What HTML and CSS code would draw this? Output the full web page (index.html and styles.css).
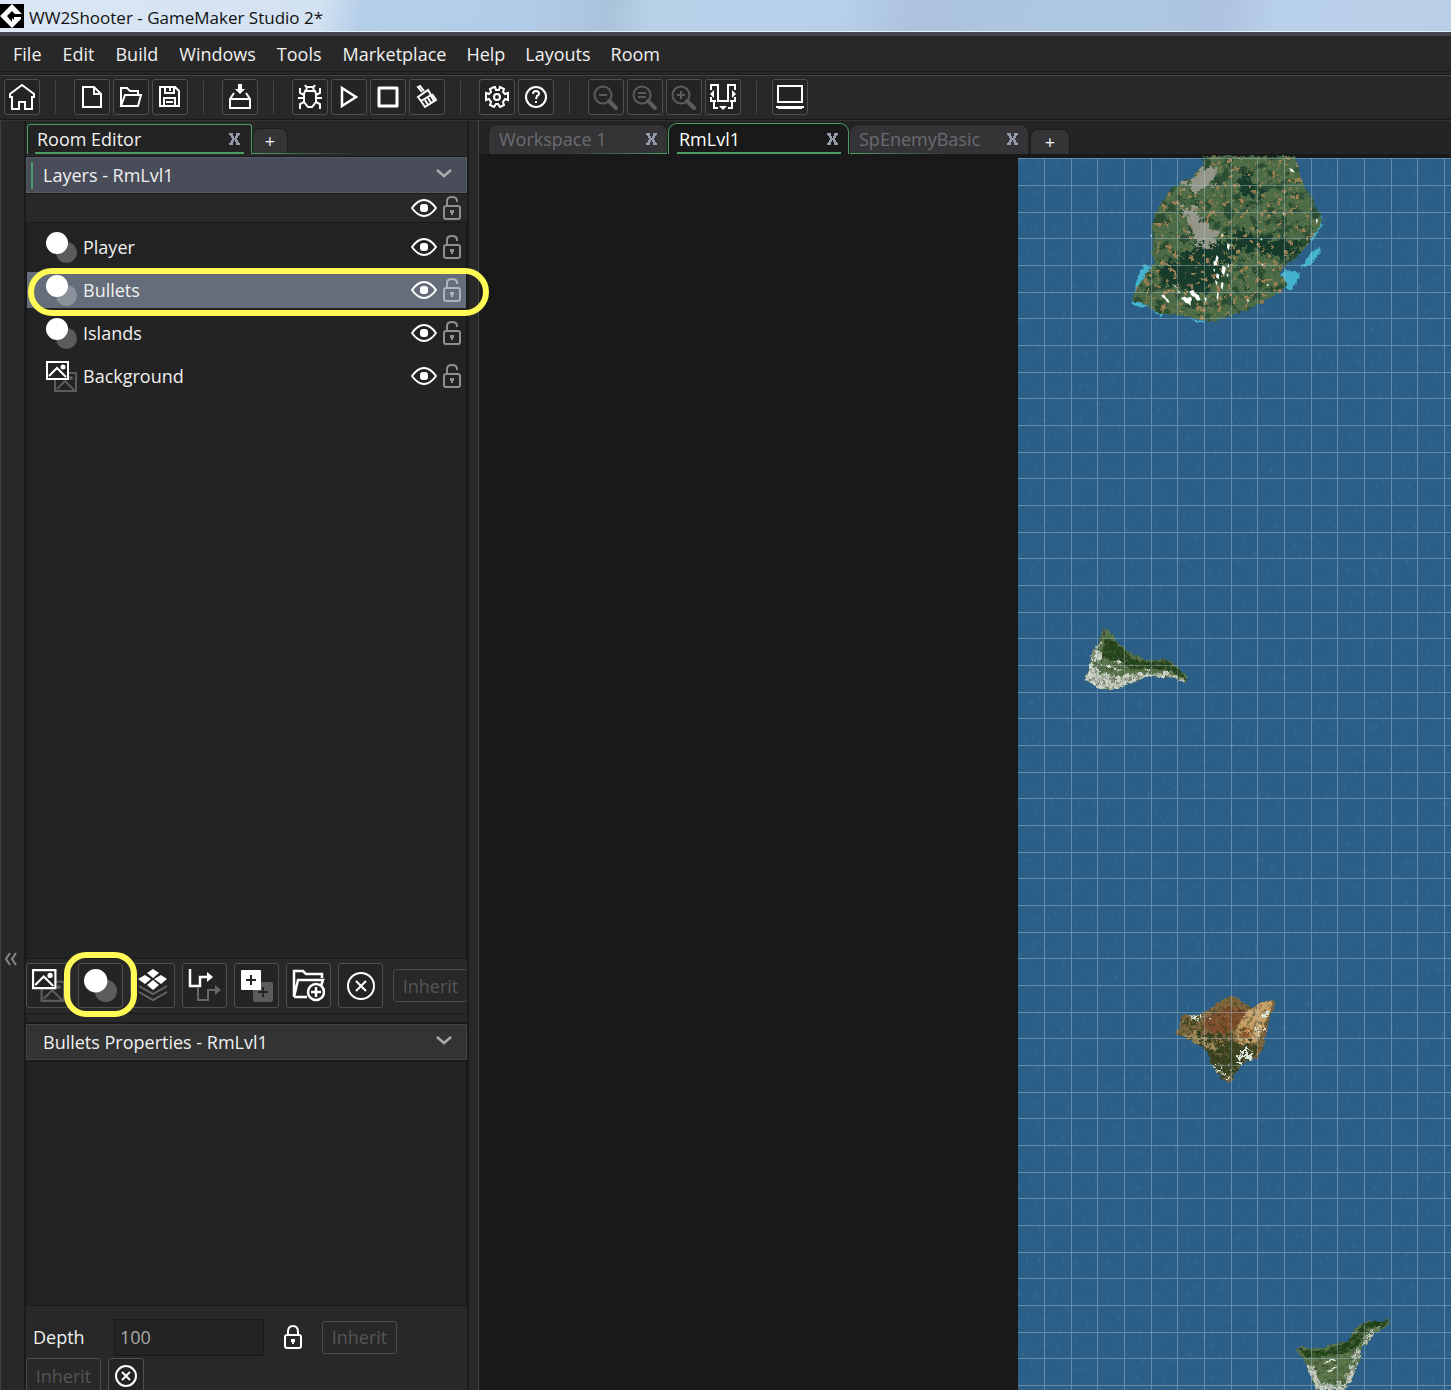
FILE: index.html
```html
<!DOCTYPE html>
<html lang="en">
<head>
<meta charset="utf-8">
<title>WW2Shooter - GameMaker Studio 2*</title>
<link rel="stylesheet" href="styles.css">
</head>
<body>
<svg class="defs" aria-hidden="true">
  <symbol id="i-close" viewBox="0 0 11 12"><path d="M0 0h4v3h1v2h1V3h1V0h4v2h-1v1H9v2H8v2h1v2h1v1h1v2H7V9H6V7H5v2H4v3H0v-2h1V9h1V7h1V5H2V3H1V2H0z" fill="currentColor"/></symbol>
  <symbol id="i-eye" viewBox="0 0 26 18"><path d="M1 9C6 2 10 1 13 1s7 1 12 8c-5 7-9 8-12 8S6 16 1 9z" fill="none" stroke="#fff" stroke-width="2"/><rect x="9" y="5" width="8" height="8" rx="3" fill="#fff"/></symbol>
  <symbol id="i-unlock" viewBox="0 0 18 24"><path d="M4 6V5q0-4 5-4t5 4v1M4 6v4M3 10h12q2 0 2 2v9q0 2-2 2H3q-2 0-2-2v-9q0-2 2-2z" fill="none" stroke="currentColor" stroke-width="2"/><path d="M8 19v-2H7v-3h4v3h-1v2z" fill="currentColor"/></symbol>
  <symbol id="i-lock" viewBox="0 0 18 24"><path d="M4 10V7q0-6 5-6t5 6v3M3 10h12q2 0 2 2v9q0 2-2 2H3q-2 0-2-2v-9q0-2 2-2z" fill="none" stroke="#fff" stroke-width="2"/><path d="M8 19v-2H7v-3h4v3h-1v2z" fill="#fff"/></symbol>
  <symbol id="i-instances" viewBox="0 0 31 31"><circle cx="20.500" cy="20.500" r="10.500" fill="#fff" fill-opacity=".26"/><circle cx="11" cy="11" r="11" fill="#fff"/></symbol>
  <symbol id="i-picture" viewBox="0 0 31 31"><g fill="none" stroke="#5c5c5c" stroke-width="2"><path d="M9 12h21v18H9zM11 28l8-8 9 9"/><circle cx="25" cy="17" r="1"/></g><path d="M1 1h21v17H1z" fill="#232323" stroke="#fff" stroke-width="2"/><path d="M3 15l8-8 9 9" fill="none" stroke="#fff" stroke-width="2"/><circle cx="17" cy="6" r="2.500" fill="#fff"/></symbol>
  <symbol id="i-chevron" viewBox="0 0 16 9"><path d="M1 1l7 6 7-6" fill="none" stroke="#aaa" stroke-width="2.500"/></symbol>
  <symbol id="i-lens" viewBox="0 0 26 26"><circle cx="10" cy="10" r="8.500" fill="none" stroke="#5c5c5c" stroke-width="2"/><path d="M16 16l7 7" stroke="#5c5c5c" stroke-width="4" stroke-linecap="round"/></symbol>
</svg>

<div class="app">
  <header class="title">
    <svg width="24" height="24" viewBox="0 0 24 24"><path d="M0 0h24v24H0z"/><path d="M12 0l10 10H12v4l2 2v-3h7v2l-9 9L0 12z" fill="#fff"/><path d="M12 7l-5 5 5 6v-6h5z"/></svg>
    <span>WW2Shooter - GameMaker Studio 2*</span>
  </header>

  <nav class="menu">
    <a href="#">File</a><a href="#">Edit</a><a href="#">Build</a><a href="#">Windows</a><a href="#">Tools</a><a href="#">Marketplace</a><a href="#">Help</a><a href="#">Layouts</a><a href="#">Room</a>
  </nav>

  <div class="toolbar">
    <div class="group">
      <button class="tool" aria-label="Home"><svg width="28" height="28" viewBox="0 0 28 28"><path d="M2 14V11L14 2l12 9v3h-2v12h-7v-7h-6v7H4V14z"/></svg></button>
    </div>
    <div class="group">
      <button class="tool" aria-label="New"><svg width="28" height="28" viewBox="0 0 28 28"><path d="M5 4h11l7 7v13H5zM16 4v7h7"/></svg></button>
      <button class="tool" aria-label="Open"><svg width="28" height="28" viewBox="0 0 28 28"><path d="M4 23V5h6l3 3h8v4M4 23l4-11h16l-3 11z"/></svg></button>
      <button class="tool" aria-label="Save"><svg width="28" height="28" viewBox="0 0 28 28"><path d="M4 4h15l4 4v15H4zM9 4v6h9V4M14 4v4M8 23v-8h11v8M10 19h7"/></svg></button>
    </div>
    <div class="group">
      <button class="tool" aria-label="Create executable"><svg width="28" height="28" viewBox="0 0 28 28"><path d="M8 10l-4 6v9h20v-9l-4-6M4 16h20"/><path d="M12 1h4v5h3l-5 5-5-5h3z" fill="#fff" stroke="none"/></svg></button>
    </div>
    <div class="group">
      <button class="tool" aria-label="Debug"><svg width="28" height="28" viewBox="0 0 28 28"><path d="M9 8h10l1 3v8l-4 5h-4l-4-5v-8zM10 8l1-4h6l1 4M11 5L9 2M17 5l2-3M8 12L4 10V5M20 12l4-2V5M8 15H2M20 15h6M8 19l-4 2v5M20 19l4 2v5"/></svg></button>
      <button class="tool" aria-label="Run"><svg width="28" height="28" viewBox="0 0 28 28"><path d="M7 5l14 9L7 23z" stroke-width="2.500"/></svg></button>
      <button class="tool" aria-label="Stop"><svg width="28" height="28" viewBox="0 0 28 28"><path d="M5 5h18v18H5z" stroke-width="3" stroke-linejoin="round"/></svg></button>
      <button class="tool" aria-label="Clean"><svg width="28" height="28" viewBox="0 0 28 28"><path d="M5 14l10-7 3 5-10 6zM8 18l4 6 11-7-4-6M9 9L5 4l2-1 4 5M12 17l3 5M15 15l3 5M18 13l3 5"/></svg></button>
    </div>
    <div class="group">
      <button class="tool" aria-label="Game options"><svg width="28" height="28" viewBox="0 0 28 28"><path d="M11 4h1l1 3h3l1-3 4 2-1 3 2 2 3-1v7l-3-1-2 3 1 3-4 2-2-3h-2l-2 3-4-2 1-3-2-3-3 1v-7l3 1 2-2-1-3z"/><circle cx="14" cy="14" r="3"/></svg></button>
      <button class="tool" aria-label="Help"><svg width="28" height="28" viewBox="0 0 28 28"><circle cx="14" cy="14" r="10"/><path d="M11 11q0-3 3-3t3 3q0 1-2 2l-1 3M14 18v2"/></svg></button>
    </div>
    <div class="group">
      <button class="tool" aria-label="Zoom out" disabled><svg width="28" height="28" viewBox="0 0 28 28"><use href="#i-lens" x="1" y="2" width="26" height="26"/><path d="M7 12h8"/></svg></button>
      <button class="tool" aria-label="Reset zoom" disabled><svg width="28" height="28" viewBox="0 0 28 28"><use href="#i-lens" x="1" y="2" width="26" height="26"/><path d="M7 10h8M7 14h8"/></svg></button>
      <button class="tool" aria-label="Zoom in" disabled><svg width="28" height="28" viewBox="0 0 28 28"><use href="#i-lens" x="1" y="2" width="26" height="26"/><path d="M7 12h8M11 8v8"/></svg></button>
      <button class="tool" aria-label="Toggle docks"><svg width="28" height="28" viewBox="0 0 28 28"><path d="M2 7V2h7v16h10V2h7v5M2 14v4h5M26 14v4h-5M5 18v7h4M23 18v7h-4M13 18h2"/><path d="M1 11l4-4v8zM27 11l-4-4v8zM10 23h8l-4 4z" fill="#fff" stroke="none"/></svg></button>
    </div>
    <div class="group tight">
      <button class="tool" aria-label="Laptop mode"><svg width="28" height="28" viewBox="0 0 28 28"><path d="M2 3h24v16H2z"/><path d="M0 23h28v2H0zM2 25h24v1H2z" fill="#fff" stroke="none"/></svg></button>
    </div>
  </div>

  <main class="body">
    <div class="strip"><button aria-label="Collapse"><svg width="12" height="14" viewBox="0 0 12 14"><path d="M5 1L1 7l4 6M11 1L7 7l4 6" fill="none" stroke="#888" stroke-width="2"/></svg></button></div>

    <aside class="dock">
      <div class="tabs dock-tabs">
        <div class="tab active">Room Editor<button class="close" aria-label="Close Room Editor"><svg width="11" height="12"><use href="#i-close"/></svg></button></div>
        <button class="add">+</button>
      </div>
      <section class="layers">
        <h2 class="head current">Layers - RmLvl1<svg width="16" height="9"><use href="#i-chevron"/></svg></h2>
        <div class="all"><svg width="26" height="18"><use href="#i-eye"/></svg><svg width="18" height="24"><use href="#i-unlock"/></svg></div>
        <ul class="list">
          <li><svg width="31" height="31"><use href="#i-instances"/></svg><span>Player</span><svg width="26" height="18"><use href="#i-eye"/></svg><svg width="18" height="24"><use href="#i-unlock"/></svg></li>
          <li class="selected"><svg width="31" height="31"><use href="#i-instances"/></svg><span>Bullets</span><svg width="26" height="18"><use href="#i-eye"/></svg><svg width="18" height="24"><use href="#i-unlock"/></svg><i class="ring wide"></i></li>
          <li><svg width="31" height="31"><use href="#i-instances"/></svg><span>Islands</span><svg width="26" height="18"><use href="#i-eye"/></svg><svg width="18" height="24"><use href="#i-unlock"/></svg></li>
          <li><svg width="31" height="31"><use href="#i-picture"/></svg><span>Background</span><svg width="26" height="18"><use href="#i-eye"/></svg><svg width="18" height="24"><use href="#i-unlock"/></svg></li>
        </ul>
        <div class="actions-wrap">
          <div class="actions">
            <button class="act" aria-label="New background layer"><svg width="33" height="33"><use href="#i-picture"/></svg></button>
            <button class="act" aria-label="New instance layer"><svg width="33" height="33"><use href="#i-instances"/></svg></button>
            <button class="act" aria-label="New tile layer"><svg width="33" height="33" viewBox="0 0 33 33"><path d="M3 17l14 8 14-8M3 23l14 8 14-8" fill="none" stroke="#666" stroke-width="2"/><path d="M17 0l6 4-6 5-6-5zM9 6l6 4-6 5-7-5zM25 6l6 4-6 5-7-5zM17 11l6 5-6 5-6-5z" fill="#fff"/></svg></button>
            <button class="act" aria-label="New path layer"><svg width="33" height="33" viewBox="0 0 33 33"><path d="M10 19v12h10V21h8" fill="none" stroke="#666" stroke-width="2"/><path d="M27 16l6 5-6 5z" fill="#666"/><path d="M2 0v17h10V8h8" fill="none" stroke="#fff" stroke-width="2.500"/><path d="M19 3l6 5-6 5z" fill="#fff"/></svg></button>
            <button class="act" aria-label="New asset layer"><svg width="33" height="33" viewBox="0 0 33 33"><rect x="13" y="13" width="20" height="20" rx="2" fill="#5c5c5c"/><path d="M18 23h10M23 18v10" stroke="#232323" stroke-width="2"/><rect x="1" y="1" width="20" height="20" rx="1" fill="#fff"/><path d="M6 11h10M11 6v10" stroke="#232323" stroke-width="2"/></svg></button>
            <button class="act" aria-label="New folder"><svg width="33" height="33" viewBox="0 0 33 33"><g fill="none" stroke="#fff" stroke-width="2.500"><path d="M2 28V2h9l3 3h16v4M2 28L6 11h25l-2 6M2 28h13"/><circle cx="24" cy="23" r="8"/><path d="M19 23h10M24 18v10"/></g></svg></button>
            <button class="act" aria-label="Delete layer"><svg width="33" height="33" viewBox="0 0 33 33"><g fill="none" stroke="#fff" stroke-width="2"><circle cx="17" cy="17" r="13"/><path d="M12 12l10 10M22 12L12 22"/></g></svg></button>
            <button class="inherit" disabled>Inherit</button>
          </div>
          <i class="ring small"></i>
        </div>
      </section>
      <section class="props">
        <h2 class="head">Bullets Properties - RmLvl1<svg width="16" height="9"><use href="#i-chevron"/></svg></h2>
        <div class="box"></div>
        <div class="field">
          <label for="depth">Depth</label>
          <input id="depth" type="text" value="100">
          <svg width="18" height="24"><use href="#i-lock"/></svg>
          <button class="inherit" disabled>Inherit</button>
        </div>
        <div class="field last">
          <button class="inherit" disabled>Inherit</button>
          <button class="tool" aria-label="Clear"><svg width="28" height="28" viewBox="0 0 28 28"><circle cx="14" cy="14" r="10"/><path d="M10 10l8 8M18 10l-8 8"/></svg></button>
        </div>
      </section>
    </aside>

    <section class="workspace">
      <div class="tabs work-tabs">
        <div class="tab before">Workspace 1<button class="close" aria-label="Close Workspace 1"><svg width="11" height="12"><use href="#i-close"/></svg></button></div>
        <div class="tab active">RmLvl1<button class="close" aria-label="Close RmLvl1"><svg width="11" height="12"><use href="#i-close"/></svg></button></div>
        <div class="tab after">SpEnemyBasic<button class="close" aria-label="Close SpEnemyBasic"><svg width="11" height="12"><use href="#i-close"/></svg></button></div>
        <button class="add">+</button>
      </div>
      <div class="canvas">
        <svg class="room" role="img" aria-label="Room with islands">
          <defs>
            <filter id="dark" x="0" y="0" width="1" height="1" color-interpolation-filters="sRGB"><feTurbulence type="fractalNoise" baseFrequency=".03 .04" numOctaves="5" seed="4"/><feColorMatrix values="0 0 0 0 .13  0 0 0 0 .27  0 0 0 0 .18  10 0 0 0 -5.200"/></filter>
            <filter id="tan" x="0" y="0" width="1" height="1" color-interpolation-filters="sRGB"><feTurbulence type="fractalNoise" baseFrequency=".06" numOctaves="3" seed="9"/><feColorMatrix values="0 0 0 0 .62  0 0 0 0 .5  0 0 0 0 .32  14 0 0 0 -8.700"/></filter>
            <filter id="light" x="0" y="0" width="1" height="1" color-interpolation-filters="sRGB"><feTurbulence type="fractalNoise" baseFrequency=".1" numOctaves="3" seed="2"/><feColorMatrix values="0 0 0 0 .46  0 0 0 0 .5  0 0 0 0 .34  5 0 0 0 -2.600"/></filter>
            <filter id="grain" x="0" y="0" width="1" height="1" color-interpolation-filters="sRGB"><feTurbulence type="fractalNoise" baseFrequency=".09" numOctaves="3" seed="7"/><feColorMatrix values="0 0 0 0 .15  0 0 0 0 .2  0 0 0 0 .09  5 0 0 0 -2.500"/></filter>
            <filter id="sea" x="0" y="0" width="1" height="1" color-interpolation-filters="sRGB"><feTurbulence type="fractalNoise" baseFrequency=".25 .12" numOctaves="3" seed="5"/><feColorMatrix values="0 0 0 0 .35  0 0 0 0 .55  0 0 0 0 .7  6 0 0 0 -3.800"/></filter>
            <filter id="rough" x="-.1" y="-.1" width="1.200" height="1.200" color-interpolation-filters="sRGB"><feTurbulence type="fractalNoise" baseFrequency=".09" numOctaves="3" seed="3" result="n"/><feDisplacementMap in="SourceGraphic" in2="n" scale="14" xChannelSelector="R" yChannelSelector="G"/></filter>
            <filter id="ragged" x="-.3" y="-.3" width="1.600" height="1.600" color-interpolation-filters="sRGB"><feTurbulence type="fractalNoise" baseFrequency=".05" numOctaves="4" seed="8" result="n"/><feDisplacementMap in="SourceGraphic" in2="n" scale="70" xChannelSelector="R" yChannelSelector="G"/></filter>
            <pattern id="grid" width="80" height="80" patternUnits="userSpaceOnUse"><path d="M26 0h1v80h-1zM53 0h1v80h-1zM79 0h1v80h-1zM0 27h80v1H0zM0 54h80v1H0zM0 0h80v1H0z" fill="#b4d0e0" fill-opacity=".4"/></pattern>
            <clipPath id="c1"><path d="M305 18L585 18 592 45 600 75 612 105 635 140 645 170 662 190 665 215 652 240 635 265 620 290 590 320 545 355 540 375 562 400 545 425 500 450 440 480 390 498 340 515 300 510 240 495 180 495 140 465 95 450 108 415 140 370 165 335 155 310 160 280 155 235 165 190 190 150 215 115 250 92 275 85 290 65 310 45z"/></clipPath>
            <clipPath id="c2"><path d="M279 82L295 92 312 105 318 122 345 143 363 163 388 168 410 182 440 182 458 175 488 186 500 200 532 228 530 244 518 246 490 232 455 234 410 228 385 242 345 256 325 268 270 268 245 252 226 238 238 210 245 160 268 126z"/></clipPath>
            <clipPath id="c3"><path d="M44 160L56 150 64 108 80 102 120 106 145 90 172 72 200 52 222 48 250 68 278 82 300 70 335 58 347 66 338 92 328 110 322 150 308 205 290 238 262 240 244 256 228 272 212 308 190 300 165 270 148 240 142 215 110 190 80 176z"/></clipPath>
            <clipPath id="c4"><path d="M78 178L96 168 120 177 165 172 205 156 235 156 245 132 262 110 288 94 330 96 356 86 360 98 345 115 315 128 296 155 272 176 270 210 254 246 244 275 220 300 140 300 122 262 105 215z"/></clipPath>
          </defs>
          <rect width="100%" height="100%" fill="#2b5f87"/>
          <rect width="100%" height="100%" filter="url(#sea)" opacity=".16"/>

          <g transform="translate(82 -8) scale(.3333)">
            <g filter="url(#rough)"><path d="M645 180L662 186 667 215 655 245 635 274 628 240zM660 292L658 315 630 345 604 355 612 338 634 306zM540 378L560 360 600 368 592 395 570 422 545 400zM135 340L160 360 156 392 130 424 100 430 112 385zM92 460L125 450 150 474 120 472zM150 475L190 497 180 500zM270 508L320 512 300 520z" fill="#45b2cd"/></g>
            <g filter="url(#rough)"><g clip-path="url(#c1)">
              <path d="M80 0h600v530H80z" fill="#4a6b45"/>
              <path d="M80 0h600v530H80z" filter="url(#light)" opacity=".5"/>
              <path d="M80 0h600v530H80z" filter="url(#dark)" opacity=".8"/>
              <path d="M180 350L260 310 320 270 380 270 385 330 350 400 300 440 230 410 190 400zM410 110L440 60 460 110 490 140 460 160zM380 260L450 250 540 270 620 270 560 330 480 300 400 310z" fill="#173c2b" filter="url(#ragged)"/>
              <path d="M80 0h600v530H80z" filter="url(#tan)"/>
              <path d="M240 96L280 90 305 55 345 50 350 85 310 115 280 135 255 110zM252 170L285 170 295 200 335 230 348 270 338 290 300 285 280 255 270 215z" fill="#95968a" filter="url(#ragged)"/>
            </g></g>
            <path d="M365 250l5 5-5 8zM382 280l8 4-4 18-5-10zM350 315l6 8-4 14-6-8zM340 335l8-4 4 12-10 6zM368 345l10 8-6 24-8-12zM384 338l5 10-6 6zM350 370l8 4-2 14-8-6zM365 395l6 5-4 20-5-10zM345 390l8 6-4 12zM352 425l4 6-2 18-4-4zM380 370l6 4-5 8zM340 355l6 4-4 8zM220 404l8 4 2 6zM230 420l10 6-2 5zM184 434l10 2 4 8 6 4 5 10-8-2-6-10-8-4zM242 444l12-4 8 4 10-4 4 8-4 8 0 12-8-8-6 0-6-8zM268 424l12-4 6 10 10 6 6 14-10 2-8-12-8-2zM312 442l8 2-2 14zM480 265l8 2-4 5zM440 448l8 2-4 6zM484 340l6 3-4 5zM568 54l10 4 6 10-12-4zM648 205l6 5-4 14zM152 253l5 5-4 4zM500 402l8 2-6 5zM548 188l6 4-5 3z" fill="#fff"/>
          </g>

          <g transform="translate(-8 442) scale(.3333)"><g filter="url(#rough)"><g clip-path="url(#c2)">
            <path d="M210 70h340v210H210z" fill="#57734a"/>
            <path d="M210 240L240 200 240 160 270 126 268 160 258 200 280 225 330 232 370 222 400 226 460 215 490 226 530 240 500 250 410 240 330 280 240 280z" fill="#ccd3c8" filter="url(#ragged)"/>
            <path d="M285 110L310 122 345 150 365 175 410 188 470 180 520 220 530 240 480 214 420 205 370 210 330 185 275 175z" fill="#23451c"/>
            <path d="M210 70h340v210H210z" filter="url(#grain)" opacity=".5"/>
            <path d="M210 70h340v210H210z" filter="url(#light)" opacity=".5"/>
            <path d="M288 196L304 202 316 208 334 210M310 184L334 188" stroke="#e4e9df" stroke-width="4" fill="none"/>
          </g></g></g>

          <g transform="translate(142 822) scale(.3333)"><g filter="url(#rough)"><g clip-path="url(#c3)">
            <path d="M30 40h330v290H30z" fill="#80663d"/>
            <path d="M120 125L160 100 210 78 260 90 240 130 190 170 140 150z" fill="#7f4e2c"/>
            <path d="M240 120L260 95 300 70 345 55 330 95 312 140 290 185 240 195 228 165z" fill="#c9a26a"/>
            <path d="M236 160L250 138 278 150 276 178 250 182z" fill="#96602f"/>
            <path d="M244 156q26-12 28 8t-20 12" fill="none" stroke="#cfa66c" stroke-width="6"/>
            <path d="M60 150L130 155 180 190 195 150 215 185 290 190 290 235 220 310 170 290 140 230 100 190zM70 118L130 108 120 128 70 130z" fill="#3d4523" filter="url(#ragged)"/>
            <path d="M64 152L120 168 165 190 190 212 150 212 110 190z" fill="#a08a58" filter="url(#ragged)"/>
            <path d="M30 40h330v290H30z" filter="url(#grain)" opacity=".5"/>
            <path d="M30 40h330v290H30z" filter="url(#tan)" opacity=".4"/>
            <path d="M312 88L328 92 322 116 306 120zM298 126L306 130 298 175 290 168zM252 212L280 208 270 232 230 246 236 230zM150 250L175 262 180 280 155 264zM182 262L192 266 184 280zM206 264L214 270 208 284zM198 288L208 294 200 306zM82 106L132 110 124 116 86 113zM42 158L52 155 50 166z" fill="#dde6dc" filter="url(#ragged)"/>
          </g></g></g>

          <g transform="translate(252 1132) scale(.3333)"><g filter="url(#rough)"><g clip-path="url(#c4)">
            <path d="M70 80h300v240H70z" fill="#57734a"/>
            <path d="M100 208L130 235 145 270 180 290 225 280 245 230 262 175 305 130 350 110 320 140 275 180 260 270 220 310 130 310z" fill="#c5cdc0" filter="url(#ragged)"/>
            <path d="M85 176L130 184 170 180 220 160 250 138 285 98 356 88 345 108 290 116 265 165 215 195 160 198 110 205z" fill="#204419"/>
            <path d="M70 80h300v240H70z" filter="url(#grain)" opacity=".5"/>
            <path d="M70 80h300v240H70z" filter="url(#light)" opacity=".5"/>
            <path d="M165 220L185 208 197 212M172 246L200 230" stroke="#e4e9df" stroke-width="4" fill="none"/>
          </g></g></g>

          <rect width="100%" height="100%" fill="url(#grid)"/>
        </svg>
      </div>
    </section>
  </main>
</div>
</body>
</html>
```

FILE: styles.css
```css
* { box-sizing: border-box; }
body {
  margin: 0;
  background: #282828;
  color: #f0f0f0;
  font: 18px/24px "Open Sans", "Noto Sans", sans-serif;
}
button, input { font: inherit; color: inherit; margin: 0; }
button { padding: 0; border: 0; background: none; }
svg { display: block; flex: none; }
.defs { position: absolute; width: 0; height: 0; }
.app { height: 100vh; display: flex; flex-direction: column; overflow: hidden; }

/* window title */
.title {
  flex: none;
  height: 35px;
  display: flex;
  align-items: center;
  gap: 5px;
  color: #111;
  font-size: 17px;
  background: linear-gradient(100deg, #dbe7f4 0, #d3e2f2 22%, #b5cee8 25%, #b3cce7 36%, #abc2db 42%, #b8d0e8 45%, #b7cfe8 58%, #acc2dd 63%, #aec8e1 76%, #adc3df 84%, #b9d0ea 88%, #b9cfe7 100%);
  border-bottom: 3px solid #41464d;
  box-shadow: inset 0 -1px #e3eff9;
}
.title span { padding-top: 3px; }

/* menu bar */
.menu {
  flex: none;
  height: 40px;
  display: flex;
  gap: 21px;
  padding: 6px 13px 0;
  border-top: 1px solid #444;
  background: linear-gradient(#1b1b1b, #1b1b1b) 0 35px / 100% 1px no-repeat, #282828;
  border-bottom: 1px solid #1b1b1b;
}
.menu a { color: inherit; text-decoration: none; }
.menu a:nth-child(n+6) { margin-right: -1px; }

/* tool bar */
.toolbar {
  flex: none;
  height: 45px;
  display: flex;
  padding: 3px 4px 0;
  border-top: 1px solid #444;
  border-bottom: 1px solid #171717;
}
.group { display: flex; gap: 3px; }
.group + .group {
  margin-left: 15px;
  padding-left: 18px;
  background: linear-gradient(#444, #444) 0 2px / 1px 33px no-repeat;
  border-left: 1px solid transparent;
  background-origin: border-box;
}
.group + .tight { padding-left: 15px; }
.tool {
  flex: none;
  width: 36px;
  height: 36px;
  display: grid;
  place-items: center;
  border: 1px solid #4f4f4f;
  border-radius: 3px;
  background: #242424;
}
.tool svg { fill: none; stroke: #fff; stroke-width: 2; }
.tool:disabled svg { stroke: #5c5c5c; }

/* docks */
.body { flex: 1; min-height: 0; display: flex; border-top: 1px solid #333; }
.strip {
  flex: none;
  width: 26px;
  display: flex;
  flex-direction: column;
  justify-content: flex-end;
  padding: 0 0 424px 4px;
  border-left: 1px solid #404040;
  border-right: 2px solid #1b1b1b;
}
.dock {
  flex: none;
  width: 453px;
  display: flex;
  flex-direction: column;
  padding-right: 11px;
  border-right: 1px solid #444;
  background: linear-gradient(#1b1b1b, #1b1b1b) 441px 0 / 2px 100% no-repeat;
}
.tabs { flex: none; display: flex; align-items: flex-end; }
.tab {
  display: flex;
  align-items: center;
  justify-content: space-between;
  height: 30px;
}
.close { color: #9299a8; }
.add { padding-bottom: 2px; border-radius: 8px 8px 0 0; background: #343437; border: 1px solid #1d1d1d; border-bottom: 0; }
.dock-tabs {
  height: 33px;
  padding-left: 1px;
  background: linear-gradient(90deg, #4d9c68, transparent) 226px 100% / 110px 1px no-repeat;
}
.dock-tabs .tab {
  width: 225px;
  padding: 0 11px 2px 9px;
  border: 1px solid #4d9c68;
  border-bottom: 0;
  border-radius: 3px 3px 0 0;
  background: linear-gradient(#4d9c68, #4d9c68) 7px 100% / 209px 2px no-repeat, #232323;
}
.dock-tabs .add { width: 36px; height: 25px; margin-bottom: 1px; padding-bottom: 0; }

.layers { flex: 1; min-height: 0; display: flex; flex-direction: column; }
.head {
  flex: none;
  height: 36px;
  margin: 0;
  padding: 0 14px 0 16px;
  display: flex;
  align-items: center;
  justify-content: space-between;
  font-size: 18px;
  font-weight: 400;
  background: #333;
  border: 1px solid #444;
  outline: 1px solid #1a1a1a;
}
.head svg { margin-bottom: 3px; }
.layers .head { margin-top: 3px; }
.current {
  background: linear-gradient(#4d9c68, #4d9c68) 4px 4px / 2px 27px no-repeat, #494d59;
  border-color: #555a67;
}
.all {
  flex: none;
  height: 29px;
  display: flex;
  align-items: center;
  justify-content: flex-end;
  gap: 6px;
  padding-right: 6px;
  color: #8f8f8f;
}
.list {
  flex: 1;
  margin: 0;
  padding: 6px 0 0;
  list-style: none;
  display: flex;
  flex-direction: column;
  gap: 7px;
  border: 1px solid #191919;
  background: #232323;
}
.list li {
  position: relative;
  height: 36px;
  display: flex;
  align-items: center;
  gap: 6px;
  padding: 0 5px 0 19px;
  color: #8f8f8f;
}
.list span { flex: 1; color: #f0f0f0; }
.list .selected { background: #646d79; color: #b0b5bc; }
.ring { position: absolute; border: 6px solid #fffa55; pointer-events: none; }
.wide { inset: -4px -23px -8px 1px; border-radius: 24px; z-index: 1; }

.actions-wrap { flex: none; position: relative; margin-top: 4px; padding-bottom: 5px; }
.actions { display: flex; gap: 7px; overflow: hidden; align-items: center; }
.small { left: 38px; top: -11px; width: 73px; height: 65px; border-radius: 22px; }
.act {
  flex: none;
  width: 45px;
  height: 45px;
  padding-left: 5px;
  border: 1px solid #4f4f4f;
  border-radius: 3px;
  background: #242424;
}
.inherit {
  flex: none;
  width: 75px;
  height: 33px;
  color: #555;
  border: 1px solid #4a4a4a;
  border-radius: 3px;
}
.actions .inherit { margin-left: 3px; }

.props {
  flex: 0 0 377px;
  padding-top: 10px;
  overflow: hidden;
  border-top: 1px solid #1a1a1a;
  background: linear-gradient(#1a1a1a, #1a1a1a) 0 8px / 100% 1px no-repeat;
}
.box { height: 245px; margin-top: 1px; border: 1px solid #191919; background: #232323; }
.field { display: flex; align-items: center; height: 38px; margin-top: 12px; padding-left: 7px; }
.field label { width: 81px; }
.field input {
  width: 150px;
  height: 37px;
  padding: 0 5px;
  color: #aaa;
  border: 1px solid #191919;
  background: #232323;
}
.field > svg { margin: 0 20px; }
.last { margin-top: 2px; padding-left: 0; gap: 7px; align-items: flex-start; }
.last .inherit { height: 36px; }

/* workspace */
.workspace { flex: 1; min-width: 0; display: flex; flex-direction: column; background: #191919; }
.work-tabs { height: 33px; padding-left: 9px; background: #242424; }
.work-tabs .tab {
  width: 180px;
  padding: 0 10px 2px;
  color: #6b6b6e;
  border: 1px solid #1d1d1d;
  border-bottom: 0;
  border-radius: 9px 9px 0 0;
  background: #343437;
}
.work-tabs .before { background: linear-gradient(90deg, transparent, #4d9c68) 100% 100% / 100px 1px no-repeat, #343437; }
.work-tabs .after { background: linear-gradient(90deg, #4d9c68, transparent) 0 100% / 100px 1px no-repeat, #343437; }
.work-tabs .active {
  width: 181px;
  height: 31px;
  padding-bottom: 1px;
  color: #fff;
  border-color: #4d9c68;
  background: linear-gradient(#4d9c68, #4d9c68) 8px 100% / 164px 2px no-repeat, #191919;
}
.work-tabs .after { padding-left: 9px; }
.work-tabs .add { width: 40px; height: 25px; margin-left: 1px; }
.canvas { flex: 1; min-height: 0; display: flex; padding: 4px 0 0 539px; }
.room { flex: 1; width: 100%; height: 100%; min-width: 0; overflow: visible; }
```
